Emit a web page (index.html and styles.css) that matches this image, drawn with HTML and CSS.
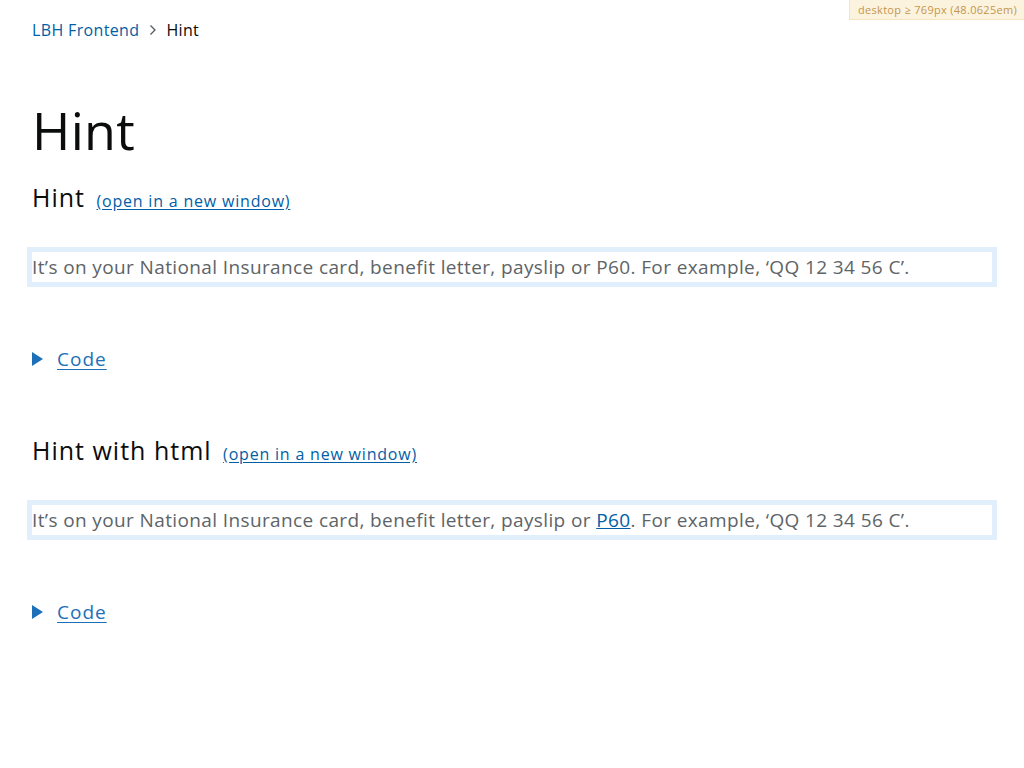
FILE: index.html
```html
<!DOCTYPE html>
<html lang="en">
<head>
<meta charset="utf-8">
<title>Hint – LBH Frontend</title>
<link rel="stylesheet" href="styles.css">
</head>
<body>
<div class="badge">desktop ≥ 769px (48.0625em)</div>
<div class="page">
  <nav class="breadcrumbs">
    <a class="crumb-link" href="#">LBH Frontend</a>
    <svg class="chev" width="8" height="12" viewBox="0 0 8 12"><path d="M1.5 1.5 L6 6 L1.5 10.5" fill="none" stroke="#505a5f" stroke-width="1.3"/></svg>
    <span class="crumb-current">Hint</span>
  </nav>
  <h1 class="title">Hint</h1>

  <section class="example">
    <h2 class="ex-heading">Hint <a class="new-window" href="#">(open in a new window)</a></h2>
    <div class="frame"><p class="hint">It’s on your National Insurance card, benefit letter, payslip or P60. For example, ‘QQ 12 34 56 C’.</p></div>
    <div class="code"><span class="tri"></span><a class="code-link" href="#">Code</a></div>
  </section>

  <section class="example">
    <h2 class="ex-heading">Hint with html <a class="new-window" href="#">(open in a new window)</a></h2>
    <div class="frame"><p class="hint">It’s on your National Insurance card, benefit letter, payslip or <a class="hint-link" href="#">P60</a>. For example, ‘QQ 12 34 56 C’.</p></div>
    <div class="code"><span class="tri"></span><a class="code-link" href="#">Code</a></div>
  </section>
</div>
</body>
</html>
```
FILE: styles.css
```css
html, body { margin: 0; padding: 0; background: #fff; }
body { font-family: "Open Sans", "Liberation Sans", sans-serif; color: #0b0c0c; }
.badge {
  position: absolute; top: 0; right: 0;
  background: #fcf3df; color: #c4964b;
  font-size: 11px; line-height: 19px; padding: 0 7px 0 8px; letter-spacing: 0.3px;
  border-left: 1px solid #f3e4c2; border-bottom: 1px solid #f3e4c2;
}
.page { padding: 0 32px; }
.breadcrumbs { display: flex; align-items: center; padding-top: 19px; height: 22px; font-size: 16px; letter-spacing: 0.35px; }
.crumb-link { color: #025ea6; text-decoration: none; }
.chev { margin: 0 9px 0 10px; }
.crumb-current { color: #0b0c0c; }
.title { margin: 0; padding-top: 59px; font-size: 52px; line-height: 60px; font-weight: 400; letter-spacing: 0.3px; }
.ex-heading { margin: 0; font-size: 25px; font-weight: 400; line-height: 32px; padding-top: 21px; letter-spacing: 1px; }
.new-window { font-size: 16px; color: #025ea6; margin-left: 4px; letter-spacing: 0.8px; text-decoration: underline; text-underline-offset: 2px; }
.frame { margin: 30px -5px 0; border: 5px solid #e1eefc; height: 30px; }
.hint { margin: 0; font-size: 19px; line-height: 30px; color: #5e6468; white-space: nowrap; letter-spacing: 0.38px; }
.hint-link { color: #025ea6; }
.code { display: flex; align-items: center; margin-top: 60px; height: 24px; }
.tri { width: 0; height: 0; border-left: 11px solid #1d70b8; border-top: 7px solid transparent; border-bottom: 7px solid transparent; margin-right: 14px; }
.code-link { font-size: 19px; color: #1d70b8; letter-spacing: 1px; text-underline-offset: 3px; }
.example + .example { margin-top: 42px; }
```
